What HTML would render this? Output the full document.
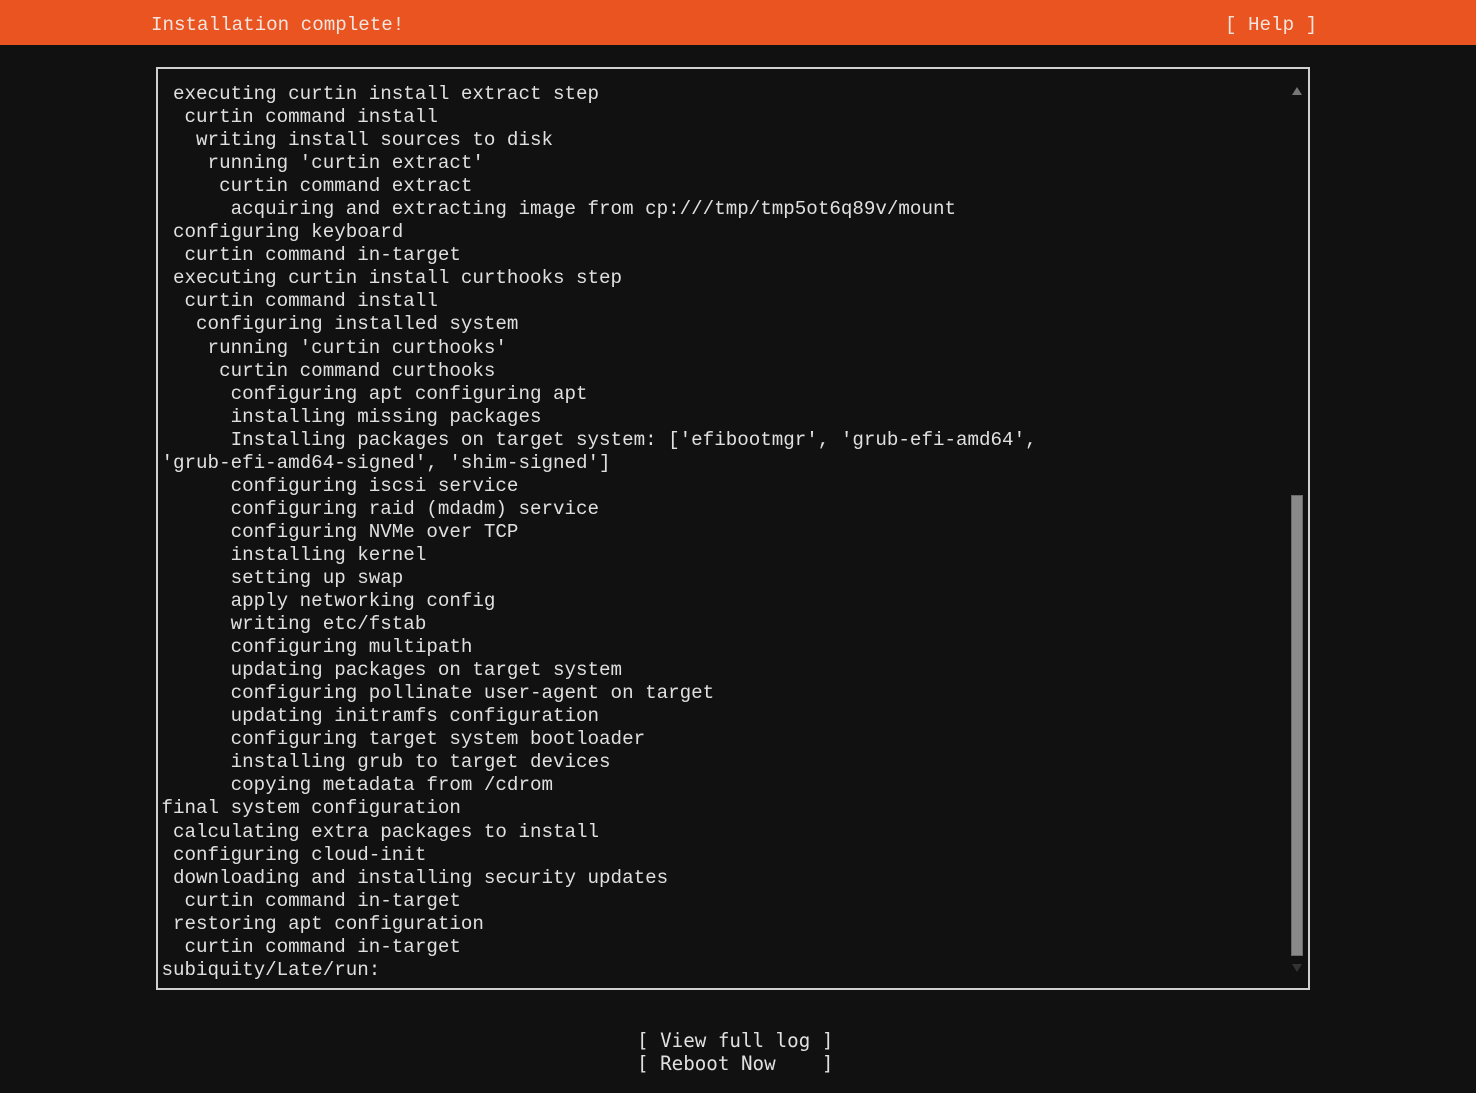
<!DOCTYPE html>
<html><head><meta charset="utf-8"><style>
html,body{margin:0;padding:0;background:#111111;width:1476px;height:1093px;overflow:hidden}
body{position:relative;font-family:"Liberation Mono",monospace;font-size:19.2px;color:#e0e0e0}
.hdr{position:absolute;left:0;top:0;width:1476px;height:45px;background:#e95420}
.t{position:absolute;white-space:pre;line-height:23.05px;margin:0}
.box{position:absolute;left:156px;top:67px;width:1150px;height:919px;border:2px solid #d0d0d0}
.thumb{position:absolute;left:1291px;top:495px;width:12px;height:461px;background:#898989;border:1px solid #6a6a6a;box-sizing:border-box}
</style></head><body>
<div class="hdr"></div>
<div class="t" style="left:151px;top:14px;color:#f3e6e0">Installation complete!</div>
<div class="t" style="left:1225px;top:14px;color:#f3e6e0">[ Help ]</div>
<div class="box"></div>
<svg style="position:absolute;left:1291px;top:86px" width="12" height="10"><polygon points="6,1 11,9 1,9" fill="#777"/></svg>
<svg style="position:absolute;left:1291px;top:963px" width="12" height="10"><polygon points="1,1 11,1 6,9" fill="#333"/></svg>
<div class="thumb"></div>
<pre class="t" style="left:161.5px;top:83px;font-family:'Liberation Mono',monospace"> executing curtin install extract step
  curtin command install
   writing install sources to disk
    running 'curtin extract'
     curtin command extract
      acquiring and extracting image from cp:///tmp/tmp5ot6q89v/mount
 configuring keyboard
  curtin command in-target
 executing curtin install curthooks step
  curtin command install
   configuring installed system
    running 'curtin curthooks'
     curtin command curthooks
      configuring apt configuring apt
      installing missing packages
      Installing packages on target system: ['efibootmgr', 'grub-efi-amd64',
'grub-efi-amd64-signed', 'shim-signed']
      configuring iscsi service
      configuring raid (mdadm) service
      configuring NVMe over TCP
      installing kernel
      setting up swap
      apply networking config
      writing etc/fstab
      configuring multipath
      updating packages on target system
      configuring pollinate user-agent on target
      updating initramfs configuration
      configuring target system bootloader
      installing grub to target devices
      copying metadata from /cdrom
final system configuration
 calculating extra packages to install
 configuring cloud-init
 downloading and installing security updates
  curtin command in-target
 restoring apt configuration
  curtin command in-target
subiquity/Late/run:</pre>
<pre class="t" style="left:637px;top:1029px">[ View full log ]
[ Reboot Now    ]</pre>
</body></html>
